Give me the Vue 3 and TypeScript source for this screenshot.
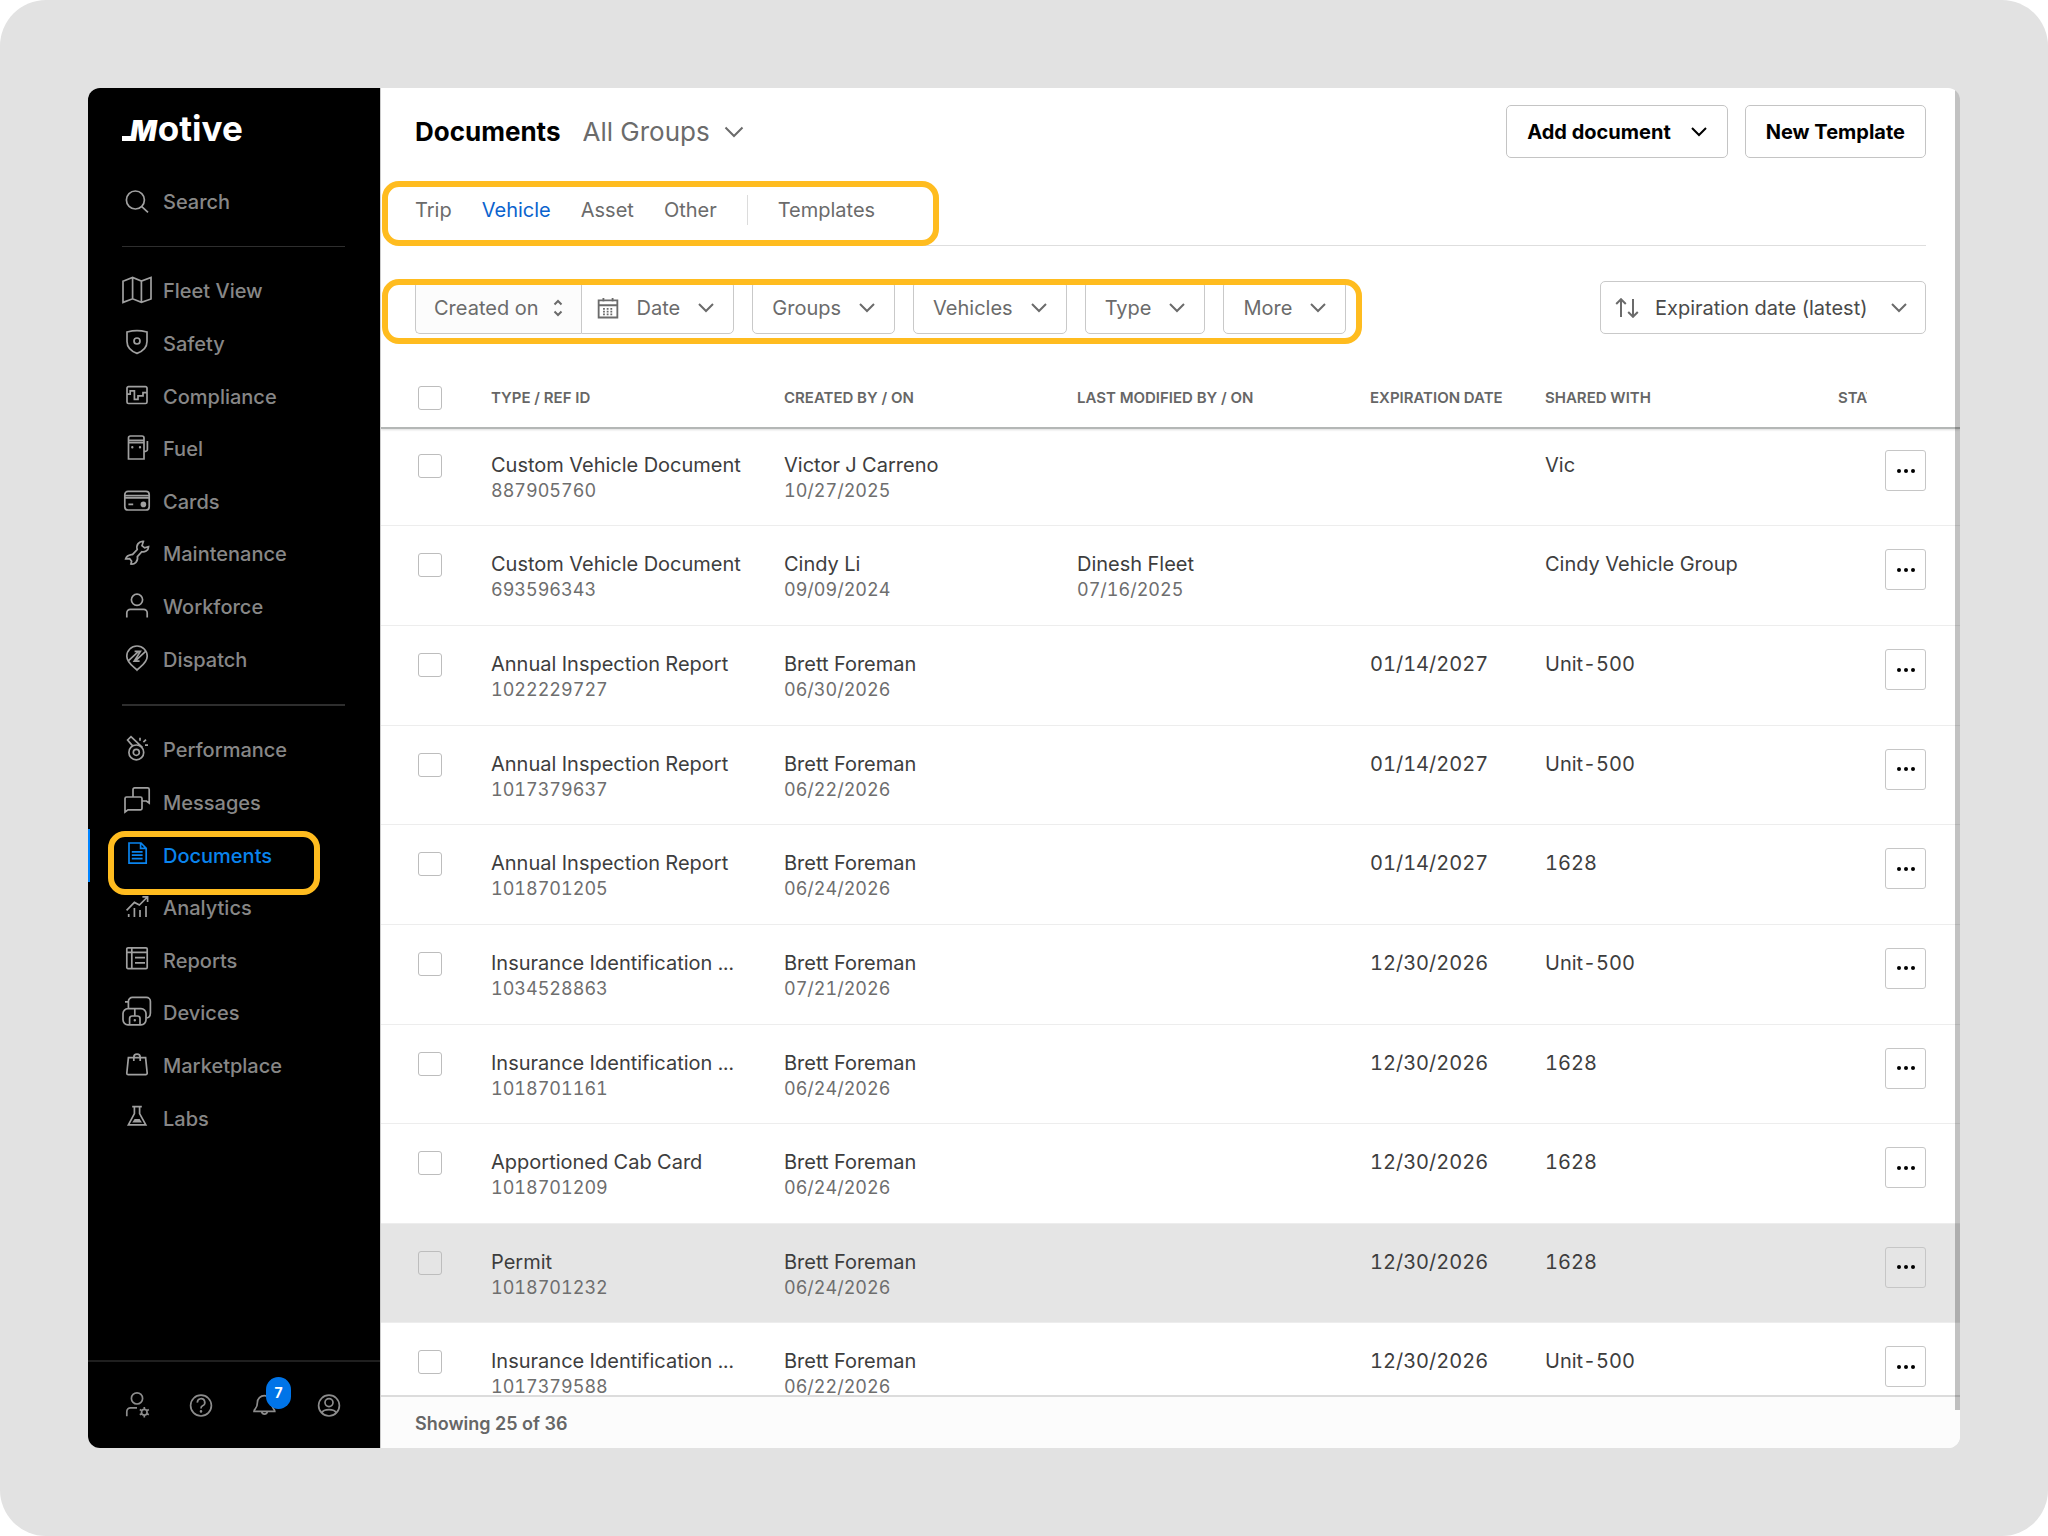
<script setup lang="ts">
import { ref } from 'vue'

interface Icon {
  line: string
  solid?: string
}
interface NavItem {
  label: string
  icon: Icon
  active?: boolean
}
interface DocumentRow {
  type: string
  refId: string
  createdBy: string
  createdOn: string
  modifiedBy?: string
  modifiedOn?: string
  expires?: string
  shared: string
  hovered?: boolean
}

const circle = (x: number, y: number, r: number): string =>
  `M${x - r} ${y}a${r} ${r} 0 1 0 ${r * 2} 0a${r} ${r} 0 1 0 ${-r * 2} 0Z`

const primaryNav: NavItem[] = [
  { label: 'Fleet View', icon: { line: 'M2 7.2L11.6 3.4L20.4 7L30 3.4V25L20.4 28.4L11.6 24.8L2 28.4ZM11.6 3.4V24.8M20.4 7V28.4' } },
  { label: 'Safety', icon: { line: 'M6 6Q11.5 4.6 16 4.6T26 6V15.5C26 21.5 21 25.5 16 27.4C11 25.5 6 21.5 6 15.5Z' + circle(16, 15, 3) } },
  { label: 'Compliance', icon: { line: 'M7.5 7.6H24.5A1.5 1.5 0 0 1 26 9.1V23A1.5 1.5 0 0 1 24.5 24.5H7.5A1.5 1.5 0 0 1 6 23V9.1A1.5 1.5 0 0 1 7.5 7.6ZM6 15.2H9.2V11.8H13.4V20.4H17V16.8H22V13.6H26' } },
  { label: 'Fuel', icon: { line: 'M9.5 4H21A2 2 0 0 1 23 6V27H7.5V6A2 2 0 0 1 9.5 4ZM7.5 8.4H23M7.5 10.6H23M26.4 9V17.5A1.8 1.8 0 0 1 24.6 19.3H23', solid: circle(11.3, 15.3, 1.2) + circle(19, 15.3, 1.2) } },
  { label: 'Cards', icon: { line: 'M7 7.4H25A3.2 3.2 0 0 1 28.2 10.6V22.8A3.2 3.2 0 0 1 25 26H7A3.2 3.2 0 0 1 3.8 22.8V10.6A3.2 3.2 0 0 1 7 7.4ZM4 11.6H28M4 13.8H28M7.4 20.4H12.2', solid: circle(22.4, 20.4, 2.8) } },
  { label: 'Maintenance', icon: { line: 'M22.4 4.4C18 4 14.8 8 16.2 12.6L11.6 17.4C10 18 6 17.6 4.7 21.8L8.6 21.6L10.6 24.2L9.9 27C13.6 27.6 17.4 24.4 16.4 19.6L20.8 14.8C23.4 15.4 27.4 14 27.6 9.6L23.6 10.8L21 8.6Z' } },
  { label: 'Workforce', icon: { line: circle(16, 9.8, 5.6) + 'M5.8 27.4V23A3.6 3.6 0 0 1 9.4 19.4H22.6A3.6 3.6 0 0 1 26.2 23V27.4' } },
  { label: 'Dispatch', icon: { line: 'M16 28C14 25.4 5.8 21.4 5.8 14.2A10.2 10.2 0 0 1 26.2 14.2C26.2 21.4 18 25.4 16 28ZM7.8 18.4L17.6 9.4M13.6 9.4H19.4L13.2 19.2H18.6M14.6 18.6L24.6 9.4' } },
]

const secondaryNav: NavItem[] = [
  { label: 'Performance', icon: { line: circle(15.3, 19.4, 7.4) + circle(15.3, 19.4, 3) + 'M11.4 12.6L6.6 7L10 3.6L21.6 14.6M19 4.8V7.8M25 6.6L22.4 9.2M24 12.2H27' } },
  { label: 'Messages', icon: { line: 'M12 11.6V4.4A1.6 1.6 0 0 1 13.6 2.8H26.6A1.6 1.6 0 0 1 28.2 4.4V18L25.4 16H21.2M5.6 12H19.4A1.6 1.6 0 0 1 21 13.6V23.2A1.6 1.6 0 0 1 19.4 24.8H7L4 27V13.6A1.6 1.6 0 0 1 5.6 12Z' } },
  { label: 'Documents', active: true, icon: { line: 'M8 5H20L25.2 10.4V25.2H8ZM19.6 5V10.4H25M10.8 13.8H21.6M10.8 17.2H21.6M10.8 20.6H21.6' } },
  { label: 'Analytics', icon: { line: 'M7.7 26V23M13.4 26V17M19 26V19M25 26V15M5.6 19.4L13.4 11.4L18.4 14L26.4 6M21.4 5.8H26.6V11' } },
  { label: 'Reports', icon: { line: 'M7 4.8H25A1.2 1.2 0 0 1 26.2 6V24.4A1.2 1.2 0 0 1 25 25.6H7A1.2 1.2 0 0 1 5.8 24.4V6A1.2 1.2 0 0 1 7 4.8ZM5.8 9.4H26.2M10.8 4.8V25.6M14 14.6H24M14 19.8H24' } },
  { label: 'Devices', icon: { line: 'M7.4 12.4V5.4A4 4 0 0 1 11.4 1.4H25.4A4 4 0 0 1 29.4 5.4V17C29.4 20 28 21.6 26 22M4 5.8H7.4M7 12.6H20A5 5 0 0 1 25 17.6V23.8A5 5 0 0 1 20 28.8H7A5 5 0 0 1 2 23.8V17.6A5 5 0 0 1 7 12.6ZM8.6 28.6V22.6A2.6 2.6 0 0 1 11.2 20H16.4A2.6 2.6 0 0 1 19 22.6V28.6M13.8 12.6V20', solid: circle(13.8, 24.2, 1.2) } },
  { label: 'Marketplace', icon: { line: 'M7.4 8.6H24.6L26.2 24.2A1.4 1.4 0 0 1 24.8 25.6H7.2A1.4 1.4 0 0 1 5.8 24.2ZM12.8 12V8.4A3.2 3.2 0 0 1 19.2 8.4V12' } },
  { label: 'Labs', icon: { line: 'M11.2 5.6H20.8M13.4 5.6V12.6L7.4 23.8H24.8L18.6 12.6V5.6', solid: 'M11.2 21.6L13.6 18H18.6L21 21.6Z' } },
]

const footerNav: NavItem[] = [
  { label: 'Admin', icon: { line: circle(16, 9.4, 5.6) + 'M5.8 27.2V22.6A3.8 3.8 0 0 1 9.6 18.8H16' + circle(23.3, 23.2, 2.8) + 'M23.3 18V20.4M23.3 26V28.4M18.8 20.6L20.8 21.8M25.8 24.6L27.8 25.8M27.8 20.6L25.8 21.8M20.8 24.6L18.8 25.8' } },
  { label: 'Help', icon: { line: circle(16, 16.6, 10.4) + 'M12.4 13.6A3.7 3.7 0 1 1 17.6 16.8Q16 17.6 16 19.4', solid: circle(16, 22.4, 1.3) } },
  { label: 'Notifications', icon: { line: 'M5 22.4C5 19 8.4 20.6 8.4 13.6A7 7 0 0 1 22.4 13.6C22.4 20.6 25.8 19 25.8 22.4ZM12.6 22.8A3 3 0 0 0 18.4 22.8' } },
  { label: 'Account', icon: { line: circle(16, 16.6, 10.4) + circle(16, 13.6, 4) + 'M9 23.6C10 21 12 20.6 16 20.6S22 21 23 23.6' } },
]

const tabs = ['Trip', 'Vehicle', 'Asset', 'Other']
const activeTab = ref('Vehicle')
const filters = ['Groups', 'Vehicles', 'Type', 'More']

const brett = { createdBy: 'Brett Foreman' }
const rows: DocumentRow[] = [
  { type: 'Custom Vehicle Document', refId: '887905760', createdBy: 'Victor J Carreno', createdOn: '10/27/2025', shared: 'Vic' },
  { type: 'Custom Vehicle Document', refId: '693596343', createdBy: 'Cindy Li', createdOn: '09/09/2024', modifiedBy: 'Dinesh Fleet', modifiedOn: '07/16/2025', shared: 'Cindy Vehicle Group' },
  { type: 'Annual Inspection Report', refId: '1022229727', ...brett, createdOn: '06/30/2026', expires: '01/14/2027', shared: 'Unit-500' },
  { type: 'Annual Inspection Report', refId: '1017379637', ...brett, createdOn: '06/22/2026', expires: '01/14/2027', shared: 'Unit-500' },
  { type: 'Annual Inspection Report', refId: '1018701205', ...brett, createdOn: '06/24/2026', expires: '01/14/2027', shared: '1628' },
  { type: 'Insurance Identification ...', refId: '1034528863', ...brett, createdOn: '07/21/2026', expires: '12/30/2026', shared: 'Unit-500' },
  { type: 'Insurance Identification ...', refId: '1018701161', ...brett, createdOn: '06/24/2026', expires: '12/30/2026', shared: '1628' },
  { type: 'Apportioned Cab Card', refId: '1018701209', ...brett, createdOn: '06/24/2026', expires: '12/30/2026', shared: '1628' },
  { type: 'Permit', refId: '1018701232', ...brett, createdOn: '06/24/2026', expires: '12/30/2026', shared: '1628', hovered: true },
  { type: 'Insurance Identification ...', refId: '1017379588', ...brett, createdOn: '06/22/2026', expires: '12/30/2026', shared: 'Unit-500' },
]
</script>

<template>
  <div class="page">
    <div class="window">
      <aside class="sidebar">
        <a class="logo" href="#"><span class="logo-m">M</span>otive</a>
        <label class="search">
          <svg class="icon" viewBox="0 0 32 32"><path :d="circle(14.4, 14, 9) + 'M20.8 20.6L27 26.4'" /></svg>
          <input type="text" placeholder="Search" aria-label="Search" />
        </label>
        <nav class="nav">
          <ul class="nav-list">
            <li v-for="item in primaryNav" :key="item.label">
              <a href="#" class="nav-link">
                <svg class="icon" viewBox="0 0 32 32"><path :d="item.icon.line" /><path v-if="item.icon.solid" class="solid" :d="item.icon.solid" /></svg>
                <span>{{ item.label }}</span>
              </a>
            </li>
          </ul>
          <ul class="nav-list second">
            <li v-for="item in secondaryNav" :key="item.label">
              <a href="#" class="nav-link" :class="{ active: item.active }">
                <svg class="icon" viewBox="0 0 32 32"><path :d="item.icon.line" /><path v-if="item.icon.solid" class="solid" :d="item.icon.solid" /></svg>
                <span>{{ item.label }}</span>
                <i v-if="item.active" class="callout nav-callout"></i>
              </a>
            </li>
          </ul>
        </nav>
        <div class="side-footer">
          <button v-for="item in footerNav" :key="item.label" type="button" :aria-label="item.label">
            <svg class="icon" viewBox="0 0 32 32"><path :d="item.icon.line" /><path v-if="item.icon.solid" class="solid" :d="item.icon.solid" /></svg>
            <b v-if="item.label === 'Notifications'" class="badge">7</b>
          </button>
        </div>
      </aside>

      <main class="main">
        <header class="top">
          <h1>Documents</h1>
          <label class="group-pick">
            <select aria-label="Group"><option>All Groups</option></select>
            <svg class="chevron large" viewBox="0 0 20 20"><path d="M1.5 5.5L10 14L18.5 5.5" /></svg>
          </label>
          <div class="actions">
            <button type="button" class="btn">
              Add document
              <svg class="chevron" viewBox="0 0 16 16"><path d="M1 4L8 11L15 4" /></svg>
            </button>
            <button type="button" class="btn">New Template</button>
          </div>
        </header>

        <nav class="tabs">
          <a v-for="tab in tabs" :key="tab" href="#" :class="{ current: tab === activeTab }" @click.prevent="activeTab = tab">{{ tab }}</a>
          <span class="rule"></span>
          <a href="#">Templates</a>
          <i class="callout tabs-callout"></i>
        </nav>

        <section class="toolbar">
          <div class="filters">
            <div class="joined">
              <button type="button" class="filter tinted">
                Created on
                <svg class="sorter" viewBox="0 0 10 18"><path d="M1.5 5.5L5 2L8.5 5.5M1.5 12.5L5 16L8.5 12.5" /></svg>
              </button>
              <button type="button" class="filter date">
                <svg class="calendar" viewBox="0 0 24 24">
                  <path d="M1.8 3.6H22.2V22.4H1.8ZM1.8 9H22.2M7 1V5M17 1V5" />
                  <path class="dots" d="M6.6 13H18M6.6 16H18M6.6 19H18" />
                </svg>
                Date
                <svg class="chevron" viewBox="0 0 16 16"><path d="M1 4L8 11L15 4" /></svg>
              </button>
            </div>
            <button v-for="name in filters" :key="name" type="button" class="filter">
              {{ name }}
              <svg class="chevron" viewBox="0 0 16 16"><path d="M1 4L8 11L15 4" /></svg>
            </button>
            <i class="callout filters-callout"></i>
          </div>
          <label class="sort">
            <svg class="arrows" viewBox="0 0 24 20"><path d="M6 19V1.5M1.2 6L6 1.2L10.8 6M18 1V18.5M13.2 14L18 18.8L22.8 14" /></svg>
            <select aria-label="Sort by"><option>Expiration date (latest)</option></select>
            <svg class="chevron" viewBox="0 0 16 16"><path d="M1 4L8 11L15 4" /></svg>
          </label>
        </section>

        <div class="table-wrap">
          <table>
            <colgroup>
              <col class="c-check" /><col class="c-wide" /><col class="c-wide" /><col class="c-wide" /><col class="c-date" /><col class="c-wide" /><col class="c-status" /><col class="c-menu" />
            </colgroup>
            <thead>
              <tr>
                <th class="check"><input type="checkbox" aria-label="Select all" /></th>
                <th>TYPE / REF ID</th>
                <th>CREATED BY / ON</th>
                <th>LAST MODIFIED BY / ON</th>
                <th>EXPIRATION DATE</th>
                <th>SHARED WITH</th>
                <th>STATUS</th>
                <th></th>
              </tr>
            </thead>
            <tbody>
              <tr v-for="row in rows" :key="row.refId" :class="{ hovered: row.hovered }">
                <td class="check"><input type="checkbox" :aria-label="'Select ' + row.refId" /></td>
                <td><div>{{ row.type }}</div><small>{{ row.refId }}</small></td>
                <td><div>{{ row.createdBy }}</div><small>{{ row.createdOn }}</small></td>
                <td><div>{{ row.modifiedBy }}</div><small>{{ row.modifiedOn }}</small></td>
                <td><div>{{ row.expires }}</div></td>
                <td><div>{{ row.shared }}</div></td>
                <td></td>
                <td class="menu">
                  <button type="button" aria-label="More actions">
                    <svg viewBox="0 0 20 6"><circle cx="3" cy="3" r="2" /><circle cx="10" cy="3" r="2" /><circle cx="17" cy="3" r="2" /></svg>
                  </button>
                </td>
              </tr>
            </tbody>
          </table>
        </div>
        <footer class="status-bar">Showing 25 of 36</footer>
        <i class="scrollbar"></i>
      </main>
    </div>
  </div>
</template>

<style>
body {
  background: #fff;
}
</style>

<style scoped>
* {
  box-sizing: border-box;
}
.page {
  height: 100vh;
  padding: 88px;
  background: #e2e2e2;
  border-radius: 46px;
  font-family: Inter, "Liberation Sans", sans-serif;
  font-size: 20px;
  line-height: 28px;
  color: #3d3d3d;
}
.window {
  display: flex;
  height: 100%;
  border-radius: 12px;
  overflow: hidden;
  background: #fff;
}
a {
  color: inherit;
  text-decoration: none;
}
button,
input,
select {
  font: inherit;
  color: inherit;
}
button {
  padding: 0;
  border: 0;
  background: none;
}
select {
  appearance: none;
  padding: 0;
  border: 0;
  background: none;
}
svg {
  flex: none;
  display: block;
  fill: none;
  stroke: currentColor;
}
.callout {
  position: absolute;
  border: 6px solid #ffbc1f;
  border-radius: 17px;
  pointer-events: none;
}

/* Sidebar */
.sidebar {
  display: flex;
  flex-direction: column;
  flex: none;
  width: 292px;
  background: #000;
  color: #878787;
}
.logo {
  display: flex;
  align-items: baseline;
  margin: 18px 0 0 34px;
  font-size: 35px;
  line-height: 44px;
  font-weight: 700;
  color: #fff;
}
.logo-m {
  position: relative;
  margin: 0 1px 0 8px;
  font-size: 28px;
  font-weight: 900;
  font-style: italic;
}
.logo-m::before {
  content: "";
  position: absolute;
  left: -8px;
  bottom: 12px;
  width: 12px;
  height: 5px;
  background: #fff;
}
.search {
  display: flex;
  align-items: center;
  gap: 10px;
  height: 40px;
  margin: 29px 34px 24px 33px;
}
.search input {
  flex: 1;
  min-width: 0;
  padding: 0;
  border: 0;
  background: none;
  font-weight: 500;
  outline: 0;
}
.search input::placeholder {
  color: #878787;
  opacity: 1;
}
.icon {
  width: 32px;
  height: 32px;
  stroke-width: 1.7;
  color: #a0a0a0;
}
.icon .solid {
  fill: currentColor;
  stroke: none;
}
.nav {
  flex: 1;
}
.nav-list {
  display: flex;
  flex-direction: column;
  height: 440px;
  margin: 0;
  padding: 19px 0 0;
  list-style: none;
  background: linear-gradient(#2e2e2e, #2e2e2e) 34px 0 / 223px 1px no-repeat;
}
.nav-list.second {
  height: 441px;
  margin-top: 18px;
  padding-top: 20px;
  background-size: 223px 2px;
}
.nav-list li {
  flex: 1;
  display: flex;
}
.nav-link {
  position: relative;
  flex: 1;
  display: flex;
  align-items: center;
  gap: 10px;
  padding-left: 33px;
  font-weight: 500;
}
.nav-link .icon {
  margin-bottom: 3px;
}
.nav-link.active,
.nav-link.active .icon {
  color: #0a84ee;
}
.nav-link.active {
  box-shadow: inset 2px 0 #0084ff;
}
.nav-callout {
  left: 20px;
  top: 2px;
  width: 212px;
  height: 64px;
}
.side-footer {
  display: flex;
  gap: 32px;
  height: 88px;
  padding: 27px 33px 0;
  border-top: 2px solid #1f1f1f;
}
.side-footer button {
  position: relative;
  height: 32px;
}
.side-footer .icon {
  color: #8c8c8c;
}
.badge {
  position: absolute;
  left: 17px;
  top: -12px;
  width: 25px;
  height: 32px;
  border-radius: 13px;
  background: #0074e8;
  color: #fff;
  font-size: 14px;
  line-height: 32px;
  text-align: center;
}

/* Main column */
.main {
  position: relative;
  flex: 1;
  min-width: 0;
  display: flex;
  flex-direction: column;
  border-left: 1px solid #ccc;
}
.top {
  display: flex;
  align-items: center;
  height: 87px;
  padding: 0 34px;
}
h1 {
  margin: 0 22px 0 0;
  font-size: 26px;
  line-height: 32px;
  font-weight: 700;
  color: #000;
}
.group-pick {
  display: flex;
  align-items: center;
  gap: 13px;
  font-size: 26px;
  color: #6b6b6b;
}
.chevron {
  width: 16px;
  height: 16px;
  stroke-width: 2;
}
.chevron.large {
  width: 20px;
  height: 20px;
}
.actions {
  display: flex;
  gap: 17px;
  margin-left: auto;
}
.btn {
  display: flex;
  align-items: center;
  gap: 20px;
  height: 53px;
  padding: 0 20px;
  border: 1px solid #c4c4c4;
  border-radius: 5px;
  font-weight: 700;
  color: #000;
}
.tabs {
  position: relative;
  display: flex;
  align-items: center;
  gap: 30px;
  height: 71px;
  margin: 0 34px;
  border-bottom: 1px solid #dedede;
  color: #6b6b6b;
}
.tabs .current {
  color: #0b63ce;
}
.tabs .rule {
  width: 1px;
  height: 30px;
  background: #dcdcdc;
}
.tabs-callout {
  left: -33px;
  bottom: -1px;
  width: 557px;
  height: 65px;
}
.toolbar {
  display: flex;
  justify-content: space-between;
  padding: 35px 34px 0;
  color: #6b6b6b;
}
.filters {
  position: relative;
  display: flex;
  gap: 18px;
}
.joined {
  display: flex;
}
.filter,
.sort {
  display: flex;
  align-items: center;
  gap: 18px;
  height: 53px;
  padding: 0 19px;
  border: 1px solid #c9c9c9;
  border-radius: 5px;
}
.filter.tinted {
  gap: 14px;
  padding: 0 18px;
  background: #fcfcfc;
  border-right: 0;
  border-radius: 5px 0 0 5px;
}
.filter.date {
  padding-left: 15px;
  border-radius: 0 5px 5px 0;
}
.sorter {
  width: 10px;
  height: 18px;
  stroke-width: 2;
}
.calendar {
  width: 22px;
  height: 22px;
  stroke-width: 2;
}
.calendar .dots {
  stroke-dasharray: 2 2;
}
.filters-callout {
  left: -33px;
  top: -2px;
  right: -16px;
  height: 65px;
}
.sort {
  padding: 0 18px 0 14px;
  gap: 16px;
}
.sort select {
  padding-right: 7px;
  color: #4a4a4a;
}
.arrows {
  width: 24px;
  height: 20px;
  stroke-width: 2;
}

/* Table */
.table-wrap {
  flex: 1;
  min-height: 0;
  margin-top: 33px;
  overflow: hidden;
}
table {
  width: 100%;
  height: 1056px;
  table-layout: fixed;
  border-collapse: collapse;
}
.c-check {
  width: 110px;
}
.c-wide {
  width: 293px;
}
.c-date {
  width: 175px;
}
.c-status {
  width: 29px;
}
th,
td {
  padding: 0;
  text-align: left;
  white-space: nowrap;
  overflow: hidden;
}
thead tr {
  height: 60px;
  box-shadow: 0 2px #b4b7b6, 0 3px 2px #dddddd;
  position: relative;
}
th {
  padding-top: 2px;
  font-size: 15px;
  font-weight: 600;
  color: #666;
}
td {
  padding-top: 24px;
  vertical-align: top;
  font-variant-numeric: tabular-nums;
}
tbody tr {
  border-bottom: 1px solid #ededed;
}
td div {
  height: 28px;
}
small {
  display: block;
  font-size: 18px;
  line-height: 24px;
  color: #6e6e6e;
}
.hovered {
  background: #e5e5e5;
}
.check {
  padding-left: 37px;
}
td.check {
  padding-top: 27px;
}
input[type="checkbox"] {
  appearance: none;
  display: block;
  width: 24px;
  height: 24px;
  margin: 0;
  border: 1px solid #bdbdbd;
  border-radius: 3px;
}
td.menu {
  padding: 23px 34px 0 0;
}
.menu button {
  display: flex;
  align-items: center;
  justify-content: center;
  width: 41px;
  height: 41px;
  margin-left: auto;
  border: 1px solid #c6c6c6;
  border-radius: 3px;
  color: #000;
}
.menu svg {
  width: 20px;
  height: 6px;
  fill: currentColor;
  stroke: none;
}
.status-bar {
  flex: none;
  height: 53px;
  padding: 0 34px;
  border-top: 2px solid #dcdcdc;
  background: #fcfcfc;
  font-size: 18px;
  line-height: 53px;
  font-weight: 600;
  color: #666;
}
.scrollbar {
  position: absolute;
  top: 0;
  right: 0;
  bottom: 38px;
  width: 5px;
  background: rgba(0, 0, 0, 0.24);
}
</style>
